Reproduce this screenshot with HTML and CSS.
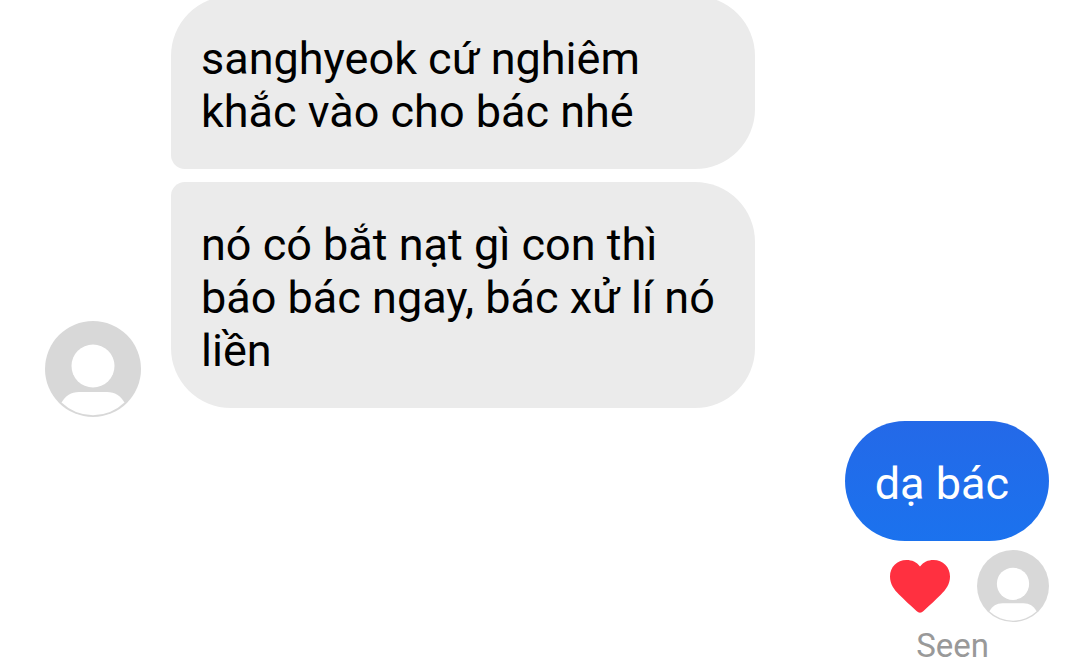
FILE: index.html
```html
<!DOCTYPE html>
<html lang="vi">
<head>
<meta charset="utf-8">
<title>Chat</title>
<link rel="stylesheet" href="styles.css">
</head>
<body>
<svg class="defs" aria-hidden="true">
  <symbol id="person" viewBox="0 0 96 96">
    <circle cx="48" cy="48" r="48" fill="#d8d8d8"/>
    <circle cx="48" cy="45" r="21.500" fill="#fff"/>
    <path d="M16.500 81.500C20.500 75 26 71 34 71H62C70 71 75.500 75 79.500 81.500A45.500 45.500 0 0 1 16.500 81.500Z" fill="#fff"/>
  </symbol>
</svg>
<main class="chat">
  <section class="incoming">
    <svg class="avatar" role="img" aria-label="Avatar"><use href="#person"/></svg>
    <div class="stack">
      <p class="bubble bubble-in first">sanghyeok cứ nghiêm khắc vào cho bác nhé</p>
      <p class="bubble bubble-in last">nó có bắt nạt gì con thì báo bác ngay, bác xử lí nó liền</p>
    </div>
  </section>
  <section class="outgoing">
    <p class="bubble bubble-out">dạ bác</p>
    <div class="receipts">
      <svg class="heart" viewBox="0 0 60 53" role="img" aria-label="Heart"><path d="M30 6.500C26.500 2 22 0 16.500 0C7 0 0 7 0 16.500C0 24 4 29.500 9 34.500C14 39.500 20 45 26.500 51Q30 54.500 33.500 51C40 45 46 39.500 51 34.500C56 29.500 60 24 60 16.500C60 7 53 0 43.500 0C38 0 33.500 2 30 6.500Z" fill="#ff3040"/></svg>
      <svg class="avatar avatar-small" role="img" aria-label="Seen by"><use href="#person"/></svg>
    </div>
    <p class="seen">Seen</p>
  </section>
</main>
</body>
</html>
```
FILE: styles.css
```css
* {
  box-sizing: border-box;
}

body {
  margin: 0;
  background: #fff;
  color: #000;
  font-family: Roboto, "Noto Sans", sans-serif;
  overflow: hidden;
}

p {
  margin: 0;
}

.defs {
  display: none;
}

/* The conversation is scrolled slightly past the first bubble. */
.chat {
  display: flex;
  flex-direction: column;
  gap: 13px;
  margin-top: -4px;
  padding: 0 30px 0 45px;
}

.incoming {
  display: flex;
  align-items: flex-end;
  gap: 30px;
}

.avatar {
  display: block;
  flex: none;
  width: 96px;
  height: 96px;
  margin-bottom: -9px;
}

.stack {
  display: flex;
  flex-direction: column;
  gap: 13px;
  max-width: 584px;
}

.bubble {
  padding: 36px 40px 31px 30px;
  border-radius: 60px;
  font-size: 45px;
  line-height: 53px;
}

.bubble-in {
  background: #ebebeb;
}

.first {
  border-bottom-left-radius: 14px;
}

.last {
  border-top-left-radius: 14px;
}

.outgoing {
  display: flex;
  flex-direction: column;
  align-items: flex-end;
}

.bubble-out {
  background: linear-gradient(#2469e8, #1b72ee);
  color: #fff;
}

.receipts {
  display: flex;
  align-items: center;
  gap: 27px;
  margin-top: 9px;
}

.heart {
  display: block;
  width: 60px;
  height: 53px;
}

.avatar-small {
  width: 72px;
  height: 72px;
  margin: 0;
}

.seen {
  margin: 4px 60px 0 0;
  color: #999;
  font-size: 33px;
  line-height: 40px;
}
```
